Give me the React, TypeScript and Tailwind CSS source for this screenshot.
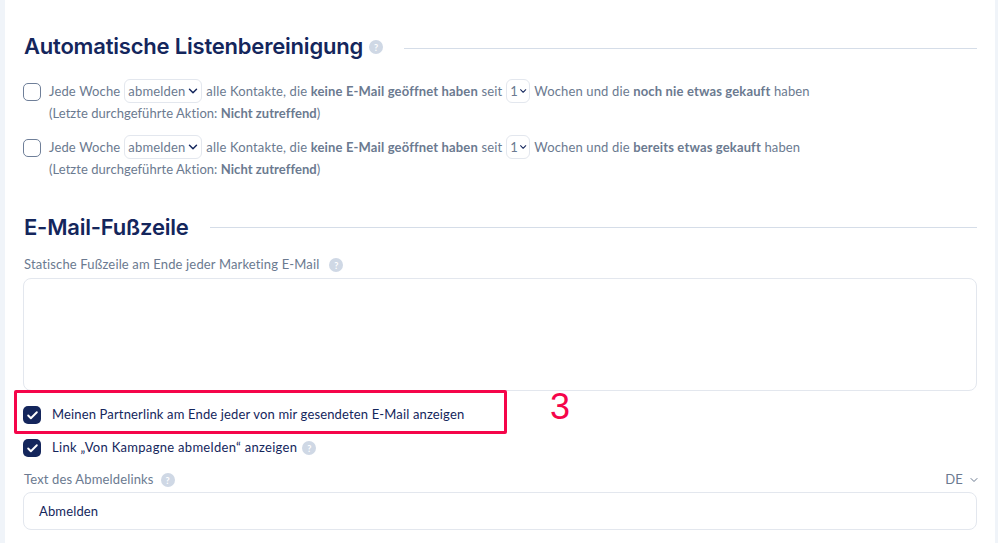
import { Check, ChevronDown } from "lucide-react";

const FONT = "font-['Lato','Noto_Sans',sans-serif]";

function Help({ className = "" }: { className?: string }) {
  return (
    <span className={`inline-flex h-[14px] w-[14px] shrink-0 items-center justify-center rounded-full bg-[#cfd8e5] text-[9px] font-bold leading-none text-white ${className}`}>
      ?
    </span>
  );
}

function Heading({ title, help }: { title: string; help?: boolean }) {
  return (
    <div className="flex h-[26px] items-center pl-[1px]">
      <h2 className="font-['Inter',sans-serif] text-[22px] font-semibold leading-[26px] tracking-[-0.2px] text-[#14265c]">{title}</h2>
      {help && <Help className="ml-[6px] mt-[2px]" />}
      <div className={`ml-[21px] h-px flex-1 bg-[#d5dde8] ${help ? "mt-[4px]" : ""}`} />
    </div>
  );
}

function FakeSelect({ value, width }: { value: string; width: string }) {
  return (
    <span className={`mx-[4px] inline-flex h-[24px] items-center justify-between rounded-[6px] border border-[#e3e7ee] pl-[3px] pr-[1px] align-middle text-[13px] text-[#6b7a90] ${width}`}>
      {value}
      <ChevronDown size={14} strokeWidth={2.5} className="text-[#14265c]" />
    </span>
  );
}

function CleanupRow({ ending }: { ending: string }) {
  return (
    <div className="flex items-start">
      <span className="mt-[4px] h-[18px] w-[18px] shrink-0 rounded-[5px] border border-[#6f7f99] bg-white" />
      <div className="ml-[8px] text-[13px] leading-[22px] tracking-[0.15px] text-[#6b7a90]">
        <div className="flex h-[24px] items-center whitespace-pre">
          Jede Woche<FakeSelect value="abmelden" width="w-[78px]" />alle Kontakte, die <b className="font-bold">keine E-Mail geöffnet haben</b> seit<FakeSelect value="1" width="w-[24px]" />Wochen und die <b className="font-bold">{ending}</b> haben
        </div>
        <div className="mt-[-1px] h-[22px] tracking-[0.05px]">
          (Letzte durchgeführte Aktion: <b className="font-bold">Nicht zutreffend</b>)
        </div>
      </div>
    </div>
  );
}

function CheckRow({ label, help, tracking }: { label: string; help?: boolean; tracking: string }) {
  return (
    <div className="flex h-[18px] items-center">
      <span className="flex h-[18px] w-[18px] shrink-0 items-center justify-center rounded-[5px] bg-[#14265c]">
        <Check size={13} strokeWidth={3.5} className="text-white" />
      </span>
      <span className={`ml-[11px] text-[13px] text-[#14265c] ${tracking}`}>{label}</span>
      {help && <Help className="ml-[5px]" />}
    </div>
  );
}

export default function App() {
  return (
    <div className={`h-[543px] w-[998px] overflow-hidden bg-[#f0f4f9] ${FONT}`}>
      <div className="relative mx-[5px] h-full w-[990px] bg-white pl-[18px] pr-[18px] pt-[33px]">
        <Heading title="Automatische Listenbereinigung" help />
        <div className="mt-[20px] flex flex-col gap-[11px]">
          <CleanupRow ending="noch nie etwas gekauft" />
          <CleanupRow ending="bereits etwas gekauft" />
        </div>

        <div className="mt-[34px]">
          <Heading title="E-Mail-Fußzeile" />
        </div>

        <div className="mt-[15px] flex h-[20px] items-center pl-[1px] text-[13px] tracking-[0.15px] text-[#6b7a90]">
          Statische Fußzeile am Ende jeder Marketing E-Mail
          <Help className="ml-[10px]" />
        </div>
        <div className="mt-[3px] h-[113px] rounded-[8px] border border-[#e3e7ee] bg-white" />

        <div className="mt-[15px]">
          <CheckRow label="Meinen Partnerlink am Ende jeder von mir gesendeten E-Mail anzeigen" tracking="tracking-[0.15px]" />
        </div>
        <div className="mt-[15px]">
          <CheckRow label="Link „Von Kampagne abmelden“ anzeigen" help tracking="tracking-[0.3px]" />
        </div>

        <div className="mt-[13px] flex h-[20px] items-center pl-[1px] text-[13px] tracking-[0.15px] text-[#6b7a90]">
          Text des Abmeldelinks
          <Help className="ml-[7px]" />
          <span className="ml-auto">DE</span>
          <ChevronDown size={12} className="ml-[5px] mr-[-3px] text-[#6b7a90]" />
        </div>
        <div className="mt-[2px] flex h-[38px] items-center rounded-[8px] border border-[#e3e7ee] bg-white pb-[-1px] pl-[15px] pt-[2px] text-[13px] tracking-[0.15px] text-[#14265c]">
          Abmelden
        </div>

        {/* annotation from the screenshot */}
        <div className="absolute left-[9px] top-[390px] h-[44px] w-[493px] rounded-[2px] border-[3px] border-[#f5054a]" />
        <span className="absolute left-[545px] top-[386px] font-['Liberation_Sans',sans-serif] text-[36px] leading-[42px] text-[#f5054a]">3</span>
      </div>
    </div>
  );
}
